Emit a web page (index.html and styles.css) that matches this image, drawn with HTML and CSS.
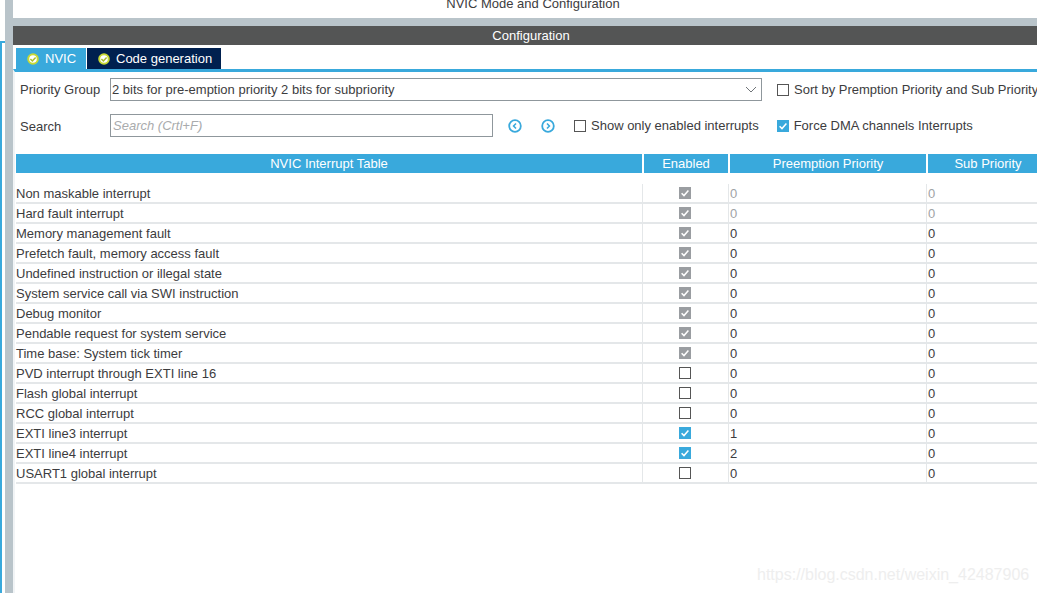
FILE: index.html
```html
<!DOCTYPE html>
<html lang="en">
<head>
<meta charset="utf-8">
<title>NVIC Configuration</title>
<link rel="stylesheet" href="styles.css">
</head>
<body>
<div class="page">
  <div class="side-accent"></div>
  <div class="side-divider"></div>
  <main class="main">
    <div class="mode-title">NVIC Mode and Configuration</div>
    <div class="gray-band"></div>
    <div class="config-title">Configuration</div>
    <div class="tabs">
      <div class="tab tab-active">
        <svg class="tab-icon" viewBox="0 0 12 12"><circle cx="6" cy="6" r="4.8" fill="#fff" stroke="#c8d934" stroke-width="2"/><path d="M3.4 6l2 2 3.2-3.4" fill="none" stroke="#a9bd2c" stroke-width="1.5"/></svg>
        <span>NVIC</span>
      </div>
      <div class="tab tab-dark">
        <svg class="tab-icon" viewBox="0 0 12 12"><circle cx="6" cy="6" r="4.8" fill="#fff" stroke="#c8d934" stroke-width="2"/><path d="M3.4 6l2 2 3.2-3.4" fill="none" stroke="#a9bd2c" stroke-width="1.5"/></svg>
        <span>Code generation</span>
      </div>
    </div>
    <div class="content">
      <div class="form-row form-row-first">
        <label class="field-label">Priority Group</label>
        <div class="select">
          <span>2 bits for pre-emption priority 2 bits for subpriority</span>
          <svg class="chevron" viewBox="0 0 12 7"><path d="M1 1l5 5 5-5" fill="none" stroke="#6f7478" stroke-width="1"/></svg>
        </div>
        <div class="check-label check-sort"><span class="box"></span><span>Sort by Premption Priority and Sub Priority</span></div>
      </div>
      <div class="form-row form-row-second">
        <label class="field-label">Search</label>
        <div class="search">Search (Crtl+F)</div>
        <svg class="nav nav-prev" viewBox="0 0 14 14"><circle cx="7" cy="7" r="5.8" fill="none" stroke="#39a9dc" stroke-width="1.8"/><path d="M8 4.5L5.6 7 8 9.5" fill="none" stroke="#39a9dc" stroke-width="1.6"/></svg>
        <svg class="nav nav-next" viewBox="0 0 14 14"><circle cx="7" cy="7" r="5.8" fill="none" stroke="#39a9dc" stroke-width="1.8"/><path d="M6 4.5L8.4 7 6 9.5" fill="none" stroke="#39a9dc" stroke-width="1.6"/></svg>
        <div class="check-label check-enabled"><span class="box"></span><span>Show only enabled interrupts</span></div>
        <div class="check-label check-dma"><span class="box box-on"><svg viewBox="0 0 12 12"><path d="M2.6 6.2l2.4 2.4 4.4-5" fill="none" stroke="#fff" stroke-width="1.5"/></svg></span><span>Force DMA channels Interrupts</span></div>
      </div>

      <div class="table-head">
        <div>NVIC Interrupt Table</div>
        <div>Enabled</div>
        <div>Preemption Priority</div>
        <div>Sub Priority</div>
      </div>

      <div class="table-body">
        <div class="row"><div>Non maskable interrupt</div><div class="c"><span class="box box-lock"><svg viewBox="0 0 12 12"><path d="M2.6 6.2l2.4 2.4 4.4-5" fill="none" stroke="#fff" stroke-width="1.5"/></svg></span></div><div class="muted">0</div><div class="muted">0</div></div>
        <div class="row"><div>Hard fault interrupt</div><div class="c"><span class="box box-lock"><svg viewBox="0 0 12 12"><path d="M2.6 6.2l2.4 2.4 4.4-5" fill="none" stroke="#fff" stroke-width="1.5"/></svg></span></div><div class="muted">0</div><div class="muted">0</div></div>
        <div class="row"><div>Memory management fault</div><div class="c"><span class="box box-lock"><svg viewBox="0 0 12 12"><path d="M2.6 6.2l2.4 2.4 4.4-5" fill="none" stroke="#fff" stroke-width="1.5"/></svg></span></div><div>0</div><div>0</div></div>
        <div class="row"><div>Prefetch fault, memory access fault</div><div class="c"><span class="box box-lock"><svg viewBox="0 0 12 12"><path d="M2.6 6.2l2.4 2.4 4.4-5" fill="none" stroke="#fff" stroke-width="1.5"/></svg></span></div><div>0</div><div>0</div></div>
        <div class="row"><div>Undefined instruction or illegal state</div><div class="c"><span class="box box-lock"><svg viewBox="0 0 12 12"><path d="M2.6 6.2l2.4 2.4 4.4-5" fill="none" stroke="#fff" stroke-width="1.5"/></svg></span></div><div>0</div><div>0</div></div>
        <div class="row"><div>System service call via SWI instruction</div><div class="c"><span class="box box-lock"><svg viewBox="0 0 12 12"><path d="M2.6 6.2l2.4 2.4 4.4-5" fill="none" stroke="#fff" stroke-width="1.5"/></svg></span></div><div>0</div><div>0</div></div>
        <div class="row"><div>Debug monitor</div><div class="c"><span class="box box-lock"><svg viewBox="0 0 12 12"><path d="M2.6 6.2l2.4 2.4 4.4-5" fill="none" stroke="#fff" stroke-width="1.5"/></svg></span></div><div>0</div><div>0</div></div>
        <div class="row"><div>Pendable request for system service</div><div class="c"><span class="box box-lock"><svg viewBox="0 0 12 12"><path d="M2.6 6.2l2.4 2.4 4.4-5" fill="none" stroke="#fff" stroke-width="1.5"/></svg></span></div><div>0</div><div>0</div></div>
        <div class="row"><div>Time base: System tick timer</div><div class="c"><span class="box box-lock"><svg viewBox="0 0 12 12"><path d="M2.6 6.2l2.4 2.4 4.4-5" fill="none" stroke="#fff" stroke-width="1.5"/></svg></span></div><div>0</div><div>0</div></div>
        <div class="row"><div>PVD interrupt through EXTI line 16</div><div class="c"><span class="box"></span></div><div>0</div><div>0</div></div>
        <div class="row"><div>Flash global interrupt</div><div class="c"><span class="box"></span></div><div>0</div><div>0</div></div>
        <div class="row"><div>RCC global interrupt</div><div class="c"><span class="box"></span></div><div>0</div><div>0</div></div>
        <div class="row"><div>EXTI line3 interrupt</div><div class="c"><span class="box box-on"><svg viewBox="0 0 12 12"><path d="M2.6 6.2l2.4 2.4 4.4-5" fill="none" stroke="#fff" stroke-width="1.5"/></svg></span></div><div>1</div><div>0</div></div>
        <div class="row"><div>EXTI line4 interrupt</div><div class="c"><span class="box box-on"><svg viewBox="0 0 12 12"><path d="M2.6 6.2l2.4 2.4 4.4-5" fill="none" stroke="#fff" stroke-width="1.5"/></svg></span></div><div>2</div><div>0</div></div>
        <div class="row"><div>USART1 global interrupt</div><div class="c"><span class="box"></span></div><div>0</div><div>0</div></div>
      </div>
    </div>
  </main>
</div>
<div class="watermark">https://blog.csdn.net/weixin_42487906</div>
</body>
</html>
```
FILE: styles.css
```css
html, body {
  margin: 0;
  padding: 0;
  width: 1037px;
  height: 593px;
  overflow: hidden;
  background: #fff;
  font-family: "Liberation Sans", Arial, sans-serif;
  font-size: 13px;
  color: #3c3c3e;
}
.page {
  display: flex;
  width: 1037px;
  height: 593px;
}
.side-accent {
  flex: 0 0 5px;
  margin-top: 41px;
  background: linear-gradient(#39a9dc, #39a9dc) 0 0 / 100% 2px no-repeat,
              linear-gradient(#39a9dc, #39a9dc) 0 0 / 2px 100% no-repeat;
}
.side-divider {
  flex: 0 0 8px;
  background: #b9c4ca;
}
.main {
  flex: 1;
  min-width: 0;
  display: flex;
  flex-direction: column;
}
.mode-title {
  height: 18px;
  line-height: 8px;
  text-align: center;
  padding-left: 16px;
}
.gray-band {
  height: 8px;
  background: #b9c4ca;
}
.config-title {
  height: 19px;
  line-height: 19px;
  background: #545555;
  color: #fff;
  text-align: center;
  padding-left: 12px;
}
.tabs {
  display: flex;
  gap: 1px;
  padding: 3px 0 0 3px;
}
.tab {
  height: 21px;
  display: flex;
  align-items: center;
  color: #fff;
  gap: 6px;
  box-sizing: border-box;
}
.tab-active {
  width: 70px;
  background: #39a9dc;
  padding-left: 11px;
}
.tab-dark {
  width: 134px;
  background: #00204f;
  padding-left: 11px;
}
.tab-icon {
  width: 12px;
  height: 12px;
  flex: none;
}
.content {
  flex: 1;
  border-top: 3px solid #39a9dc;
  border-left: 2px solid #f1f4f6;
  padding-left: 1px;
  min-height: 0;
}
.form-row {
  display: flex;
  align-items: center;
  height: 23px;
  white-space: nowrap;
}
.form-row-first { margin-top: 6px; }
.form-row-second { margin-top: 13px; }
.form-row-second .field-label { padding-top: 2px; }
.field-label {
  width: 94px;
  padding-left: 4px;
  flex: none;
  box-sizing: border-box;
}
.select {
  width: 652px;
  height: 23px;
  box-sizing: border-box;
  border: 1px solid #8f979c;
  display: flex;
  align-items: center;
  justify-content: space-between;
  padding: 0 4px 0 1px;
  flex: none;
}
.chevron {
  width: 12px;
  height: 7px;
}
.search {
  width: 383px;
  height: 23px;
  box-sizing: border-box;
  border: 1px solid #8f979c;
  line-height: 21px;
  padding-left: 2px;
  font-style: italic;
  color: #a9abad;
  flex: none;
}
.nav {
  width: 14px;
  height: 14px;
  flex: none;
}
.nav-prev { margin-left: 15px; }
.nav-next { margin-left: 19px; }
.check-label {
  display: flex;
  align-items: center;
  gap: 5px;
  flex: none;
}
.check-sort { margin-left: 15px; }
.check-enabled { margin-left: 19px; }
.check-dma { margin-left: 18px; }
.box {
  width: 12px;
  height: 12px;
  box-sizing: border-box;
  border: 1px solid #555;
  display: inline-block;
  flex: none;
}
.box svg {
  display: block;
  width: 12px;
  height: 12px;
}
.box-on, .box-lock {
  border: 0;
}
.box-on { background: #39a9dc; }
.box-lock { background: #9a9da1; }
.table-head {
  display: grid;
  grid-template-columns: 626px 84px 196px 120px;
  gap: 2px;
  height: 19px;
  margin-top: 17px;
}
.table-head > div {
  background: #39a9dc;
  color: #fff;
  text-align: center;
  line-height: 19px;
}
.table-body {
  margin-top: 11px;
  width: 1021px;
}
.row {
  display: grid;
  grid-template-columns: 626px 86px 198px 1fr;
  height: 20px;
  box-sizing: border-box;
  border-bottom: 2px solid #e4e7e9;
  line-height: 19px;
}
.row > div + div {
  border-left: 1px solid #e4e7e9;
  padding-left: 1px;
}
.row > .c {
  display: flex;
  align-items: center;
  justify-content: center;
  padding: 0 2px 1px 0;
}
.row > .muted { color: #a0a3a6; }
.watermark {
  position: absolute;
  left: 757px;
  top: 566px;
  font-size: 16px;
  color: #eeeeee;
  white-space: nowrap;
}
```
